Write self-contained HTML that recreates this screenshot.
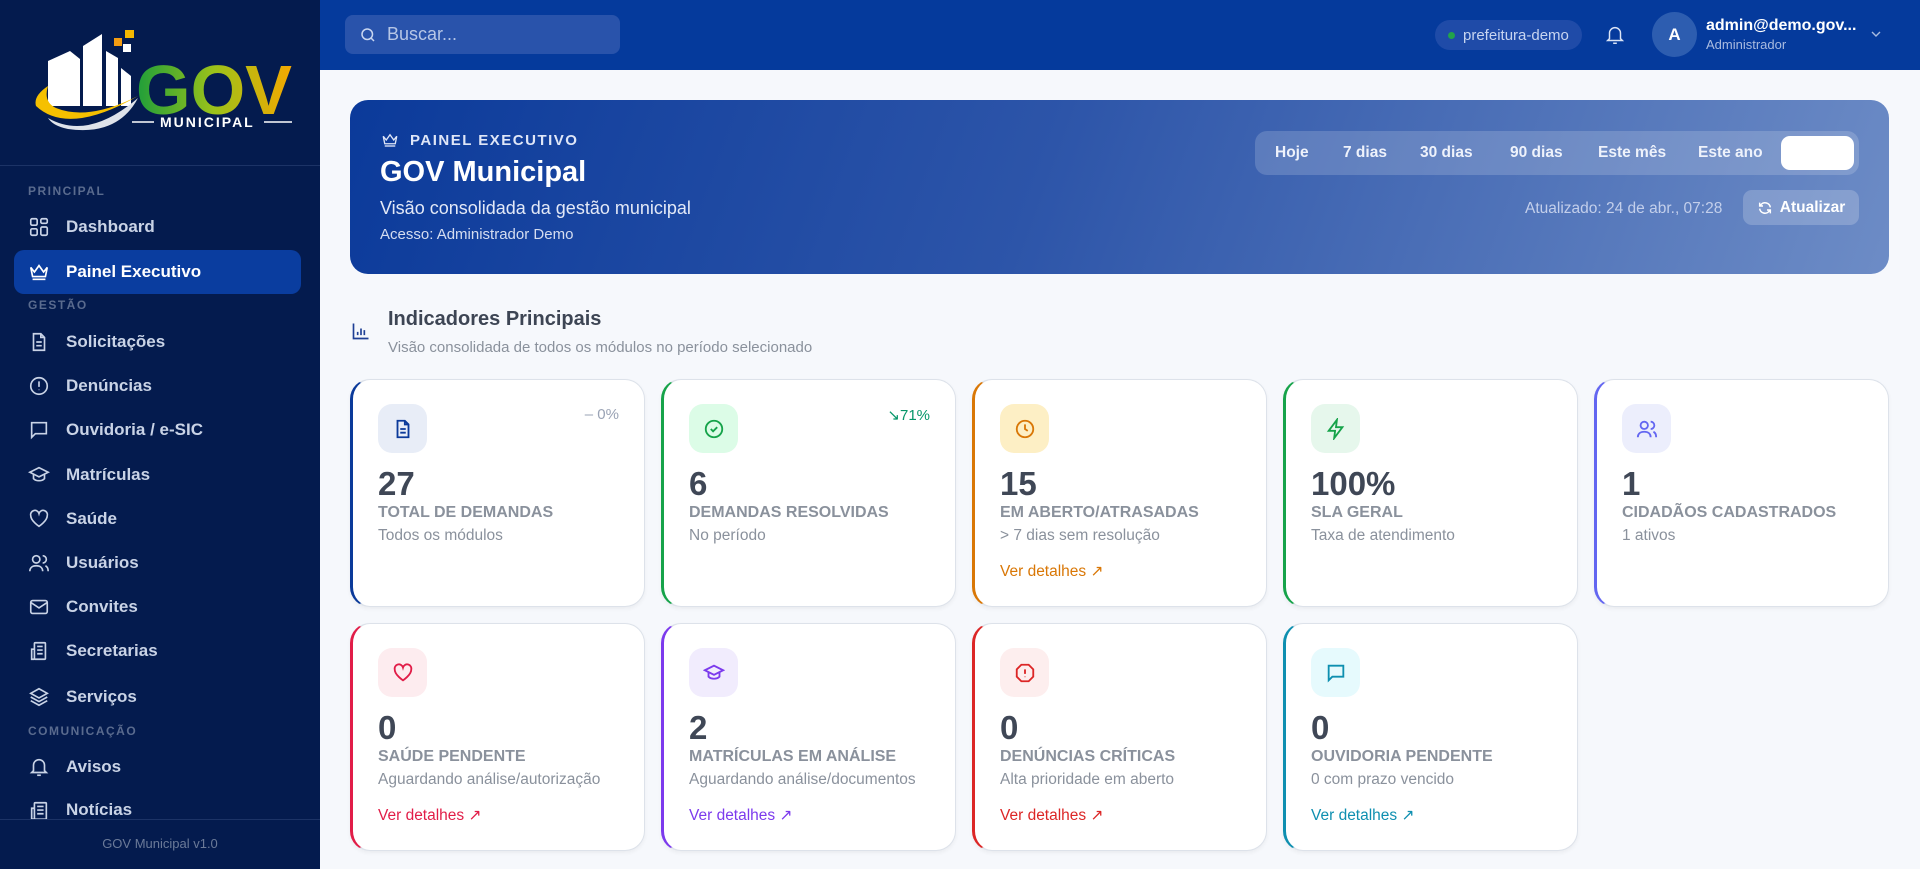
<!DOCTYPE html>
<html><head><meta charset="utf-8"><style>
*{box-sizing:border-box;margin:0;padding:0}
body{width:1920px;height:869px;overflow:hidden;background:#f6f8fc;font-family:"Liberation Sans",sans-serif;position:relative}
.sb{position:absolute;left:0;top:0;width:320px;height:869px;background:#041b4e}
.sb .div{position:absolute;left:0;right:0;height:1px;background:#1c3366}
.sec{position:absolute;left:28px;font-size:12px;font-weight:bold;letter-spacing:1.5px;color:#5a6b8e}
.it{position:absolute;left:14px;width:287px;height:44px;display:flex;align-items:center;padding-left:14px;color:#c9d3e6;font-size:17px;font-weight:bold;border-radius:10px}
.it svg{width:22px;height:22px;margin-right:16px;flex:none}
.it.act{background:#0a3d9f;color:#fff}
.top{position:absolute;left:320px;top:0;right:0;height:70px;background:#053a9c}
.search{position:absolute;left:25px;top:15px;width:275px;height:39px;border-radius:8px;background:#2953ab;color:#b6c6e6;font-size:18px;display:flex;align-items:center;padding-left:14px}
.hero{position:absolute;left:350px;top:100px;width:1539px;height:174px;border-radius:18px;background:linear-gradient(110deg,#0b3a9a 0%,#2d55a9 45%,#6d8cc6 100%);color:#fff}
.card{position:absolute;width:295px;height:228px;background:#fff;border-radius:20px;border:1px solid #dde2ea;border-left:3px solid;box-shadow:0 2px 4px rgba(0,0,0,.05)}
.ib{position:absolute;left:25px;top:24px;width:49px;height:49px;border-radius:14px;display:flex;align-items:center;justify-content:center}
.ib svg{width:22px;height:22px}
.num{position:absolute;left:25px;top:85px;font-size:33px;font-weight:bold;color:#3f4756}
.lab{position:absolute;left:25px;top:124px;font-size:16px;font-weight:bold;color:#8a919c}
.sub{position:absolute;left:25px;top:147px;font-size:15.5px;color:#8a919c}
.lnk{position:absolute;left:25px;top:182px;font-size:15.5px}
.tr{position:absolute;right:25px;top:26px;font-size:15px}
</style></head><body>
<div class="sb">
<svg style="position:absolute;left:28px;top:26px" width="270" height="112" viewBox="0 0 270 112">
<path d="M20 80 L20 35 L42 25 L52 33 L52 80 Z" fill="#fff"/>
<path d="M55 80 L55 20 L74 8 L74 80 Z" fill="#fff"/>
<path d="M78 80 L78 25 L90 32 L90 80 Z" fill="#fff"/>
<path d="M93 80 L93 42 L103 50 L103 80 Z" fill="#fff"/>
<rect x="86" y="12" width="8" height="8" fill="#f39c12"/><rect x="97" y="4" width="9" height="8" fill="#f5b800"/><rect x="95" y="18" width="8" height="8" fill="#fff"/>
<path d="M8 80 Q40 110 110 70 Q60 95 28 82 Q15 76 20 60 Q5 70 8 80Z" fill="#f5c000"/>
<path d="M20 92 Q60 115 110 72 Q90 110 40 103 Q25 100 20 92Z" fill="#dfe3ea"/>
<defs><linearGradient id="g" x1="0" x2="1"><stop offset="0" stop-color="#1e9e3a"/><stop offset=".5" stop-color="#9cc21a"/><stop offset="1" stop-color="#f5a800"/></linearGradient></defs>
<text x="108" y="88" font-family="Liberation Sans" font-weight="bold" font-size="70" fill="url(#g)" textLength="156" lengthAdjust="spacingAndGlyphs">GOV</text>
<line x1="104" y1="96" x2="126" y2="96" stroke="#fff" stroke-width="1.5"/><line x1="236" y1="96" x2="264" y2="96" stroke="#fff" stroke-width="1.5"/>
<text x="132" y="101" font-family="Liberation Sans" font-weight="bold" font-size="14" letter-spacing="2" fill="#fff">MUNICIPAL</text>
</svg>
<div class="div" style="top:165px"></div>
<div class="sec" style="top:184px">PRINCIPAL</div>
<div class="it" style="top:205px"><svg viewBox="0 0 24 24" fill="none" stroke="currentColor" stroke-width="1.8"><rect x="3" y="3" width="7" height="7" rx="1.5"/><rect x="14" y="3" width="7" height="5" rx="1.5"/><rect x="14" y="12" width="7" height="9" rx="1.5"/><rect x="3" y="14" width="7" height="7" rx="1.5"/></svg>Dashboard</div>
<div class="it act" style="top:250px"><svg viewBox="0 0 24 24" fill="none" stroke="currentColor" stroke-width="1.8"><path d="M3 7l4 5 5-7 5 7 4-5-2 10H5z"/><path d="M5 20h14"/></svg>Painel Executivo</div>
<div class="sec" style="top:298px">GESTÃO</div>
<div class="it" style="top:320px"><svg viewBox="0 0 24 24" fill="none" stroke="currentColor" stroke-width="1.8"><path d="M14 3H6v18h12V7z"/><path d="M14 3v4h4M9 12h6M9 16h6"/></svg>Solicitações</div>
<div class="it" style="top:364px"><svg viewBox="0 0 24 24" fill="none" stroke="currentColor" stroke-width="1.8"><circle cx="12" cy="12" r="9"/><path d="M12 7v6M12 16v.5"/></svg>Denúncias</div>
<div class="it" style="top:408px"><svg viewBox="0 0 24 24" fill="none" stroke="currentColor" stroke-width="1.8"><path d="M4 4h16v12H8l-4 4z"/></svg>Ouvidoria / e-SIC</div>
<div class="it" style="top:453px"><svg viewBox="0 0 24 24" fill="none" stroke="currentColor" stroke-width="1.8"><path d="M2 9l10-5 10 5-10 5z"/><path d="M6 11v5c3 3 9 3 12 0v-5"/></svg>Matrículas</div>
<div class="it" style="top:497px"><svg viewBox="0 0 24 24" fill="none" stroke="currentColor" stroke-width="1.8"><path d="M12 20S3 14 3 8.5A4.5 4.5 0 0 1 12 6a4.5 4.5 0 0 1 9 2.5C21 14 12 20 12 20z"/></svg>Saúde</div>
<div class="it" style="top:541px"><svg viewBox="0 0 24 24" fill="none" stroke="currentColor" stroke-width="1.8"><circle cx="9" cy="8" r="4"/><path d="M2 21c0-4 3-6 7-6s7 2 7 6M16 4a4 4 0 0 1 0 8M19 15c2 1 3 3 3 6"/></svg>Usuários</div>
<div class="it" style="top:585px"><svg viewBox="0 0 24 24" fill="none" stroke="currentColor" stroke-width="1.8"><rect x="3" y="5" width="18" height="14" rx="2"/><path d="M3 7l9 6 9-6"/></svg>Convites</div>
<div class="it" style="top:629px"><svg viewBox="0 0 24 24" fill="none" stroke="currentColor" stroke-width="1.8"><rect x="7" y="3" width="12" height="18" rx="1"/><path d="M7 10H4v11h3M10 7h6M10 11h6M10 15h6"/></svg>Secretarias</div>
<div class="it" style="top:675px"><svg viewBox="0 0 24 24" fill="none" stroke="currentColor" stroke-width="1.8"><path d="M12 3l9 5-9 5-9-5z"/><path d="M3 12l9 5 9-5M3 16l9 5 9-5"/></svg>Serviços</div>
<div class="sec" style="top:724px">COMUNICAÇÃO</div>
<div class="it" style="top:745px"><svg viewBox="0 0 24 24" fill="none" stroke="currentColor" stroke-width="1.8"><path d="M6 16V10a6 6 0 0 1 12 0v6l2 2H4z"/><path d="M10 21h4"/></svg>Avisos</div>
<div class="it" style="top:789px;height:30px;overflow:hidden;align-items:flex-start;padding-top:11px"><svg viewBox="0 0 24 24" fill="none" stroke="currentColor" stroke-width="1.8"><rect x="7" y="3" width="13" height="18" rx="1"/><path d="M7 9H4v12h3M10 7h7M10 11h7M10 15h7"/></svg>Notícias</div>
<div class="div" style="top:819px"></div>
<div style="position:absolute;top:836px;width:320px;text-align:center;font-size:13px;color:#6b7a98">GOV Municipal v1.0</div>
</div>

<div class="top">
<div class="search"><svg width="18" height="18" viewBox="0 0 24 24" fill="none" stroke="#c9d6f0" stroke-width="2"><circle cx="11" cy="11" r="7"/><path d="M20 20l-4-4"/></svg><span style="margin-left:10px">Buscar...</span></div>
<div style="position:absolute;left:1115px;top:20px;width:147px;height:30px;border-radius:15px;background:#1f4ba8;color:#c8d5f0;font-size:15px;display:flex;align-items:center;padding-left:13px"><span style="width:7px;height:7px;border-radius:50%;background:#22a34a;margin-right:8px"></span>prefeitura-demo</div>
<svg style="position:absolute;left:1284px;top:23px" width="22" height="24" viewBox="0 0 24 24" fill="none" stroke="#dbe3f5" stroke-width="1.6"><path d="M6 16V10a6 6 0 0 1 12 0v6l2 2H4z"/><path d="M10 21h4"/></svg>
<div style="position:absolute;left:1332px;top:12px;width:45px;height:45px;border-radius:50%;background:#2d5db0;color:#fff;font-weight:bold;font-size:17px;display:flex;align-items:center;justify-content:center">A</div>
<div style="position:absolute;left:1386px;top:17px;color:#fff;font-weight:bold;font-size:16px">admin@demo.gov...</div>
<div style="position:absolute;left:1386px;top:37px;color:#a9bbe0;font-size:13px">Administrador</div>
<svg style="position:absolute;left:1550px;top:29px" width="12" height="10" viewBox="0 0 12 10" fill="none" stroke="#a9bbe0" stroke-width="1.4"><path d="M2 3l4 4 4-4"/></svg>
</div>

<div class="hero">
<div style="position:absolute;left:30px;top:31px;font-size:15px;font-weight:bold;letter-spacing:1.5px;color:#dfe6f7;display:flex;align-items:center"><svg width="20" height="18" viewBox="0 0 24 24" fill="none" stroke="#dfe6f7" stroke-width="1.8" style="margin-right:10px"><path d="M3 7l4 5 5-7 5 7 4-5-2 10H5z"/><path d="M5 20h14"/></svg>PAINEL EXECUTIVO</div>
<div style="position:absolute;left:30px;top:56px;font-size:29px;font-weight:bold">GOV Municipal</div>
<div style="position:absolute;left:30px;top:98px;font-size:18px;color:#e3e9f7">Visão consolidada da gestão municipal</div>
<div style="position:absolute;left:30px;top:126px;font-size:15px;color:#d5ddf0">Acesso: Administrador Demo</div>
<div style="position:absolute;left:905px;top:31px;width:604px;height:44px;border-radius:12px;background:rgba(255,255,255,.17);font-size:15.5px;font-weight:bold;color:#eef2fb">
<span style="position:absolute;left:20px;top:13px">Hoje</span><span style="position:absolute;left:88px;top:13px">7 dias</span><span style="position:absolute;left:165px;top:13px">30 dias</span><span style="position:absolute;left:255px;top:13px">90 dias</span><span style="position:absolute;left:343px;top:13px">Este mês</span><span style="position:absolute;left:443px;top:13px">Este ano</span>
<div style="position:absolute;left:526px;top:5px;width:73px;height:34px;background:#fff;border-radius:9px"></div></div>
<div style="position:absolute;left:1175px;top:100px;font-size:15.5px;color:#c3cfeb">Atualizado: 24 de abr., 07:28</div>
<div style="position:absolute;left:1393px;top:90px;width:116px;height:35px;border-radius:9px;background:rgba(255,255,255,.2);font-size:15.5px;font-weight:bold;display:flex;align-items:center;justify-content:center"><svg width="16" height="16" viewBox="0 0 24 24" fill="none" stroke="#fff" stroke-width="2.2" style="margin-right:7px"><path d="M20 11a8 8 0 0 0-14-4L4 9M4 13a8 8 0 0 0 14 4l2-2M4 4v5h5M20 20v-5h-5"/></svg>Atualizar</div>
</div>

<svg style="position:absolute;left:351px;top:321px" width="20" height="20" viewBox="0 0 24 24" fill="none" stroke="#1e3f95" stroke-width="2"><path d="M3 3v18h18M8 17v-4M12 17v-8M16 17v-6"/></svg>
<div style="position:absolute;left:388px;top:308px;font-size:20px;font-weight:bold;color:#3d4554">Indicadores Principais</div>
<div style="position:absolute;left:388px;top:339px;font-size:15px;color:#8a919c">Visão consolidada de todos os módulos no período selecionado</div>

<div class="card" style="left:350px;top:379px;border-left-color:#0b3a9a"><div class="ib" style="background:#e8edf7"><svg viewBox="0 0 24 24" fill="none" stroke="#0b3a9a" stroke-width="2"><path d="M14 3H6v18h12V7z"/><path d="M14 3v4h4M9 12h6M9 16h6"/></svg></div><div class="tr" style="color:#9aa3b5">– 0%</div><div class="num">27</div><div class="lab">TOTAL DE DEMANDAS</div><div class="sub">Todos os módulos</div></div>
<div class="card" style="left:661px;top:379px;border-left-color:#16a34a"><div class="ib" style="background:#dcfce7"><svg viewBox="0 0 24 24" fill="none" stroke="#16a34a" stroke-width="2"><circle cx="12" cy="12" r="9"/><path d="M8.5 12l2.5 2.5 4.5-4.5"/></svg></div><div class="tr" style="color:#059669">↘71%</div><div class="num">6</div><div class="lab">DEMANDAS RESOLVIDAS</div><div class="sub">No período</div></div>
<div class="card" style="left:972px;top:379px;border-left-color:#d97706"><div class="ib" style="background:#fdefc5"><svg viewBox="0 0 24 24" fill="none" stroke="#d97706" stroke-width="2"><circle cx="12" cy="12" r="9"/><path d="M12 7v5l3 2"/></svg></div><div class="num">15</div><div class="lab">EM ABERTO/ATRASADAS</div><div class="sub">&gt; 7 dias sem resolução</div><div class="lnk" style="color:#d97706">Ver detalhes ↗</div></div>
<div class="card" style="left:1283px;top:379px;border-left-color:#16a34a"><div class="ib" style="background:#e6f7ec"><svg viewBox="0 0 24 24" fill="none" stroke="#16a34a" stroke-width="2"><path d="M13 2L4 14h7l-1 8 9-12h-7z"/></svg></div><div class="num">100%</div><div class="lab">SLA GERAL</div><div class="sub">Taxa de atendimento</div></div>
<div class="card" style="left:1594px;top:379px;border-left-color:#6366f1"><div class="ib" style="background:#eceefc"><svg viewBox="0 0 24 24" fill="none" stroke="#6366f1" stroke-width="2"><circle cx="9" cy="8" r="4"/><path d="M2 21c0-4 3-6 7-6s7 2 7 6M16 4a4 4 0 0 1 0 8M19 15c2 1 3 3 3 6"/></svg></div><div class="num">1</div><div class="lab">CIDADÃOS CADASTRADOS</div><div class="sub">1 ativos</div></div>

<div class="card" style="left:350px;top:623px;border-left-color:#e11d48"><div class="ib" style="background:#fdecef"><svg viewBox="0 0 24 24" fill="none" stroke="#e11d48" stroke-width="2"><path d="M12 20S3 14 3 8.5A4.5 4.5 0 0 1 12 6a4.5 4.5 0 0 1 9 2.5C21 14 12 20 12 20z"/></svg></div><div class="num">0</div><div class="lab">SAÚDE PENDENTE</div><div class="sub">Aguardando análise/autorização</div><div class="lnk" style="color:#e11d48">Ver detalhes ↗</div></div>
<div class="card" style="left:661px;top:623px;border-left-color:#7c3aed"><div class="ib" style="background:#f1ecfd"><svg viewBox="0 0 24 24" fill="none" stroke="#7c3aed" stroke-width="2"><path d="M2 9l10-5 10 5-10 5z"/><path d="M6 11v5c3 3 9 3 12 0v-5"/></svg></div><div class="num">2</div><div class="lab">MATRÍCULAS EM ANÁLISE</div><div class="sub">Aguardando análise/documentos</div><div class="lnk" style="color:#7c3aed">Ver detalhes ↗</div></div>
<div class="card" style="left:972px;top:623px;border-left-color:#dc2626"><div class="ib" style="background:#fdeeee"><svg viewBox="0 0 24 24" fill="none" stroke="#dc2626" stroke-width="2"><path d="M8 3h8l5 5v8l-5 5H8l-5-5V8z"/><path d="M12 8v5M12 16v.5"/></svg></div><div class="num">0</div><div class="lab">DENÚNCIAS CRÍTICAS</div><div class="sub">Alta prioridade em aberto</div><div class="lnk" style="color:#dc2626">Ver detalhes ↗</div></div>
<div class="card" style="left:1283px;top:623px;border-left-color:#0e8fb0"><div class="ib" style="background:#e6fafd"><svg viewBox="0 0 24 24" fill="none" stroke="#0e8fb0" stroke-width="2"><path d="M4 4h16v12H8l-4 4z"/></svg></div><div class="num">0</div><div class="lab">OUVIDORIA PENDENTE</div><div class="sub">0 com prazo vencido</div><div class="lnk" style="color:#0e8fb0">Ver detalhes ↗</div></div>
</body></html>
